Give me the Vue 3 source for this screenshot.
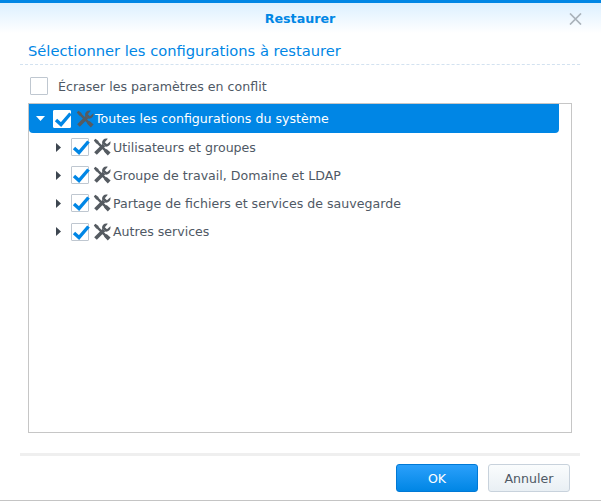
<script setup>
const children = [
  'Utilisateurs et groupes',
  'Groupe de travail, Domaine et LDAP',
  'Partage de fichiers et services de sauvegarde',
  'Autres services'
]
</script>

<template>
  <div class="dialog">
    <header class="titlebar">
      <span class="title">Restaurer</span>
      <svg class="close" width="13" height="12" viewBox="0 0 13 12">
        <path d="M1 .5L12 11.5M12 .5L1 11.5" stroke="#a9b2ba" stroke-width="1.7" fill="none" />
      </svg>
    </header>
    <main class="body">
      <h2 class="heading">Sélectionner les configurations à restaurer</h2>
      <label class="option">
        <span class="box"></span>
        <span>Écraser les paramètres en conflit</span>
      </label>
      <div class="tree">
        <div class="root">
          <svg class="arrow" width="9" height="5" viewBox="0 0 9 5"><path d="M0 0H9L4.5 5Z" fill="#fff" /></svg>
          <span class="box check root-check">
            <svg width="18" height="15" viewBox="0 0 18 15"><path d="M2 8L7 12.5L16.5 1.5" stroke="#0086e5" stroke-width="3.4" fill="none" /></svg>
          </span>
          <svg class="tool" width="18" height="18" viewBox="0 0 18 18">
            <path d="M2.5 15.5L11 7" stroke="#555b61" stroke-width="3.8" />
            <path d="M17.4 3.2L14 6.2L11.8 4.2L14.8 .8C11.2 -.2 8.4 2.4 9.2 5.8L11 7L12.2 8.6C15.8 9.2 18.2 6.2 17.4 3.2Z" fill="#555b61" />
            <path d="M3.6 3.6L14.8 14.8" stroke="#555b61" stroke-width="2.4" />
            <path d="M.8 2.4L2.4 .8L5.8 3.2L3.4 5.8Z" fill="#555b61" />
            <path d="M11 13.6L13.6 11L17.6 14.6L14.8 17.6Z" fill="#555b61" />
          </svg>
          <span class="root-label">Toutes les configurations du système</span>
        </div>
        <div v-for="item in children" :key="item" class="row">
          <svg class="expander" width="5" height="9" viewBox="0 0 5 9"><path d="M0 0V9L5 4.5Z" fill="#3d4650" /></svg>
          <span class="box check small">
            <svg width="18" height="15" viewBox="0 0 18 15"><path d="M2 8L7 12.5L16.5 1.5" stroke="#0086e5" stroke-width="3.4" fill="none" /></svg>
          </span>
          <svg class="tool" width="18" height="18" viewBox="0 0 18 18">
            <path d="M2.5 15.5L11 7" stroke="#555b61" stroke-width="3.8" />
            <path d="M17.4 3.2L14 6.2L11.8 4.2L14.8 .8C11.2 -.2 8.4 2.4 9.2 5.8L11 7L12.2 8.6C15.8 9.2 18.2 6.2 17.4 3.2Z" fill="#555b61" />
            <path d="M3.6 3.6L14.8 14.8" stroke="#555b61" stroke-width="2.4" />
            <path d="M.8 2.4L2.4 .8L5.8 3.2L3.4 5.8Z" fill="#555b61" />
            <path d="M11 13.6L13.6 11L17.6 14.6L14.8 17.6Z" fill="#555b61" />
          </svg>
          <span class="row-label">{{ item }}</span>
        </div>
      </div>
    </main>
    <footer class="footer">
      <button class="btn primary">OK</button>
      <button class="btn">Annuler</button>
    </footer>
  </div>
</template>

<style scoped>
.dialog {
  width: 601px;
  height: 501px;
  box-sizing: border-box;
  background: #fff;
  border-top: 3px solid #0086e5;
  border-bottom: 1px solid #c4c4c4;
  font-family: "DejaVu Sans", "Liberation Sans", sans-serif;
  font-size: 12.6px;
  color: #4f5965;
  display: flex;
  flex-direction: column;
  overflow: hidden;
}
.titlebar {
  height: 30px;
  flex: none;
  display: flex;
  align-items: center;
  justify-content: center;
  position: relative;
  background: linear-gradient(#dcf0ff, #fff);
}
.title {
  font-weight: 700;
  font-size: 12.7px;
  color: #0086e5;
  margin-right: 1px;
}
.close {
  position: absolute;
  right: 19px;
  top: 10px;
}
.body {
  flex: 1;
  margin: 0 21px 0 20px;
  display: flex;
  flex-direction: column;
  min-height: 0;
}
.heading {
  margin: 0;
  height: 32px;
  box-sizing: border-box;
  padding: 8px 0 0 8px;
  font-size: 14.7px;
  line-height: 20px;
  font-weight: 400;
  color: #0086e5;
  border-bottom: 1px dashed #d3e2f0;
}
.option {
  display: flex;
  align-items: center;
  gap: 10px;
  height: 38px;
  box-sizing: border-box;
  padding: 4px 0 0 10px;
}
.box {
  width: 16px;
  height: 16px;
  border: 1px solid #bfc7d0;
  border-radius: 1px;
  background: #fff;
  flex: none;
  display: flex;
  align-items: center;
  justify-content: center;
  position: relative;
}
.check svg {
  position: absolute;
  left: 0;
  top: 1px;
}
.tree {
  width: 544px;
  height: 330px;
  box-sizing: border-box;
  margin-left: 8px;
  border: 1px solid #c6c6c6;
  flex: none;
}
.root {
  height: 29px;
  width: 530px;
  border-radius: 0 0 4px 4px;
  background: #0086e5;
  color: #fff;
  display: flex;
  align-items: center;
}
.arrow {
  margin-left: 7px;
}
.root-check {
  margin-left: 8px;
  border-color: #fff;
}
.root .tool {
  margin-left: 5px;
}
.root-label {
  margin-left: 1px;
}
.row {
  height: 28.2px;
  display: flex;
  align-items: center;
}
.expander {
  margin-left: 27px;
}
.small {
  margin-left: 10px;
}
.row .tool {
  margin-left: 4px;
  margin-right: 1px;
}
.row-label {
  margin-left: 1px;
}
.footer {
  height: 47px;
  box-sizing: border-box;
  margin: 0 21px 0 20px;
  border-top: 3px solid #efefef;
  display: flex;
  justify-content: flex-end;
  align-items: flex-start;
  gap: 10px;
  padding: 8px 10px 0 0;
  flex: none;
}
.btn {
  width: 82px;
  height: 28px;
  box-sizing: border-box;
  border: 1px solid #c8d2dc;
  border-radius: 3px;
  background: linear-gradient(#fafcfd, #e9eff4);
  font: inherit;
  color: #4f5965;
  padding: 0;
}
.primary {
  border-color: #0079d6;
  background: linear-gradient(#2ba0fb, #0086e5);
  color: #fff;
}
</style>

<style>
html, body { margin: 0; }
</style>
